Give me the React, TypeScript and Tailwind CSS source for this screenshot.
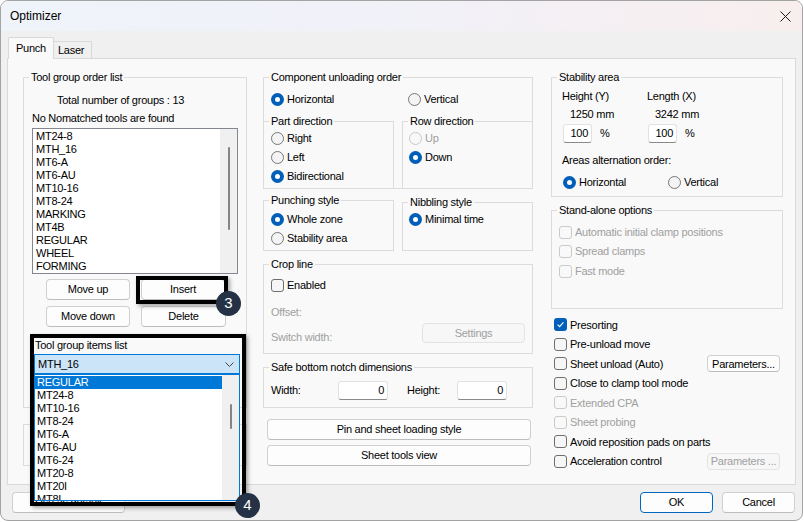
import React from "react";

type RProps = { checked?: boolean; disabled?: boolean; label: string; className?: string };

function Radio({ checked = false, disabled = false, label, className = "" }: RProps) {
  return (
    <div className={`flex items-center h-[14px] gap-[3px] whitespace-nowrap ${disabled ? "text-[#a0a0a0]" : "text-black"} ${className}`}>
      {checked ? (
        <span className="w-[13px] h-[13px] rounded-full bg-[#005fb8] flex items-center justify-center shrink-0">
          <span className="w-[5px] h-[5px] rounded-full bg-white" />
        </span>
      ) : (
        <span
          className={`w-[13px] h-[13px] rounded-full border shrink-0 ${
            disabled ? "border-[#c8c8c8] bg-[#f8f8f8]" : "border-[#767676] bg-[#f4f4f4]"
          }`}
        />
      )}
      <span>{label}</span>
    </div>
  );
}

function Check({ checked = false, disabled = false, label, className = "" }: RProps) {
  return (
    <div className={`flex items-center h-[14px] gap-[3px] whitespace-nowrap ${disabled ? "text-[#a0a0a0]" : "text-black"} ${className}`}>
      {checked ? (
        <span className="w-[13px] h-[13px] rounded-[3px] bg-[#005fb8] flex items-center justify-center shrink-0">
          <svg width="9" height="9" viewBox="0 0 9 9">
            <path d="M1.6 4.7 L3.6 6.6 L7.4 2.3" fill="none" stroke="white" strokeWidth="1.1" />
          </svg>
        </span>
      ) : (
        <span
          className={`w-[13px] h-[13px] rounded-[3px] border shrink-0 ${
            disabled ? "border-[#cacaca] bg-[#f9f9f9]" : "border-[#6e6e6e] bg-[#f6f6f6]"
          }`}
        />
      )}
      <span>{label}</span>
    </div>
  );
}

function Btn({
  children,
  className = "",
  disabled = false,
}: {
  children: React.ReactNode;
  className?: string;
  disabled?: boolean;
}) {
  return (
    <div
      className={`flex items-center justify-center rounded-[4px] border whitespace-nowrap ${
        disabled
          ? "border-[#e3e3e3] bg-[#f7f7f7] text-[#a0a0a0]"
          : "border-[#d0d0d0] border-b-[#bdbdbd] bg-[#fdfdfd] text-black"
      } ${className}`}
    >
      {children}
    </div>
  );
}

function Group({
  label,
  className = "",
  children,
}: {
  label?: string;
  className?: string;
  children?: React.ReactNode;
}) {
  return (
    <fieldset className={`border-[#dcdcdc] min-w-0 ${className}`}>
      {label && <legend className="ml-[5px] px-[2px] leading-[14px] whitespace-nowrap">{label}</legend>}
      {children}
    </fieldset>
  );
}

function Input({ value, className = "" }: { value: string; className?: string }) {
  return (
    <div
      className={`h-[19px] bg-white border border-[#e2e2e2] border-b-[#8a8a8a] rounded-[3px] flex items-center justify-end pr-[3px] ${className}`}
    >
      {value}
    </div>
  );
}

const orderItems = ["MT24-8", "MTH_16", "MT6-A", "MT6-AU", "MT10-16", "MT8-24", "MARKING", "MT4B", "REGULAR", "WHEEL", "FORMING"];
const dropItems = ["REGULAR", "MT24-8", "MT10-16", "MT8-24", "MT6-A", "MT6-AU", "MT6-24", "MT20-8", "MT20I", "MT8I"];

export default function App() {
  return (
    <div className="relative w-[804px] h-[522px] bg-white font-['Liberation_Sans',Arial,sans-serif] text-[11px] tracking-[-0.25px] text-black">
      <div className="w-[803px] h-[521px] rounded-[8px] border border-[#a3a3a3] overflow-hidden flex flex-col bg-[#f0f0f0]">
        {/* Title bar */}
        <div className="h-[30px] shrink-0 flex items-center justify-between pl-[9px] pr-[9px] bg-gradient-to-r from-[#eff3fa] via-[#f1f1f8] to-[#f8eeee]">
          <span className="text-[12px] tracking-normal">Optimizer</span>
          <svg width="11" height="11" viewBox="0 0 11 11" className="mr-[2px]">
            <path d="M0.5 0.5 L10.5 10.5 M10.5 0.5 L0.5 10.5" stroke="#1b1b1b" strokeWidth="1" />
          </svg>
        </div>

        {/* Tabs */}
        <div className="h-[27px] shrink-0 flex items-end pl-[7px] relative z-10">
          <div className="h-[22px] w-[46px] -mb-px border border-b-0 border-[#d9d9d9] bg-[#f9f9f9] pl-[7px] pt-[3px] leading-[14px] rounded-t-[2px]">
            Punch
          </div>
          <div className="h-[17px] w-[38px] border border-l-0 border-b-0 border-[#d9d9d9] bg-[#f0f0f0] pl-[4px] pt-[1px] leading-[14px]">
            Laser
          </div>
        </div>

        {/* Panel */}
        <div className="ml-[6px] w-[789px] h-[427px] shrink-0 border border-[#d9d9d9] bg-[#f9f9f9] flex pl-[15px] pt-[11px]">
          {/* Left column */}
          <div className="w-[224px] flex flex-col shrink-0">
            <Group label="Tool group order list" className="border h-[338px]">
              <div className="pl-[8px] flex flex-col">
                <div className="mt-[9px] leading-[14px] pl-[25px]">Total number of groups : 13</div>
                <div className="mt-[4px] leading-[14px]">No Nomatched tools are found</div>
                <div className="mt-[3px] w-[206px] h-[146px] border border-[#828790] bg-white flex">
                  <div className="flex-1 pl-[3px] pt-[1px] leading-[13px]">
                    {orderItems.map((t) => (
                      <div key={t} className="h-[13px]">
                        {t}
                      </div>
                    ))}
                  </div>
                  <div className="w-[17px] bg-[#f0f0f0] flex justify-center pt-[18px]">
                    <div className="w-[2px] h-[83px] rounded-full bg-[#858585]" />
                  </div>
                </div>
                <div className="mt-[5px] flex gap-[11px] ml-[14px]">
                  <Btn className="w-[84px] h-[21px]">Move up</Btn>
                  <Btn className="w-[84px] h-[21px]">Insert</Btn>
                </div>
                <div className="mt-[6px] flex gap-[11px] ml-[14px]">
                  <Btn className="w-[84px] h-[21px]">Move down</Btn>
                  <Btn className="w-[85px] h-[21px]">Delete</Btn>
                </div>
                <div className="mt-[11px] ml-[3px] leading-[14px]">Tool group items list</div>
                <div className="mt-[2px] ml-[2px] w-[206px] h-[20px] border border-[#0078d7] bg-[#cce4f7] flex items-center justify-between pl-[3px] pr-[5px]">
                  <span>MTH_16</span>
                  <svg width="9" height="5" viewBox="0 0 9 5">
                    <path d="M0.5 0.5 L4.5 4.5 L8.5 0.5" fill="none" stroke="#444" strokeWidth="1" />
                  </svg>
                </div>
              </div>
            </Group>
            <div className="mt-[16px] h-[42px] border border-[#dcdcdc]" />
          </div>

          {/* Middle column */}
          <div className="w-[270px] ml-[16px] flex flex-col shrink-0">
            <Group label="Component unloading order" className="border h-[119px]">
              <div className="mt-[8px] grid grid-cols-[130px_130px] gap-x-[8px]">
                <Radio checked label="Horizontal" className="pl-[7px]" />
                <Radio label="Vertical" className="pl-[6px]" />
              </div>
              <div className="mt-[8px] grid grid-cols-[130px_130px] gap-x-[8px]">
                <Group label="Part direction" className="border-0 border-t border-r h-[74px]">
                  <div className="mt-[3px] flex flex-col gap-[5px] pl-[7px]">
                    <Radio label="Right" />
                    <Radio label="Left" />
                    <Radio checked label="Bidirectional" />
                  </div>
                </Group>
                <Group label="Row direction" className="border-0 border-t border-l h-[74px]">
                  <div className="mt-[3px] flex flex-col gap-[5px] pl-[6px]">
                    <Radio disabled label="Up" />
                    <Radio checked label="Down" />
                  </div>
                </Group>
              </div>
            </Group>

            <div className="mt-[4px] grid grid-cols-[131px_131px] gap-x-[8px] items-start">
              <Group label="Punching style" className="border h-[58px]">
                <div className="mt-[5px] flex flex-col gap-[5px] pl-[7px]">
                  <Radio checked label="Whole zone" />
                  <Radio label="Stability area" />
                </div>
              </Group>
              <Group label="Nibbling style" className="border h-[56px] mt-[2px]">
                <div className="mt-[3px] flex flex-col gap-[5px] pl-[6px]">
                  <Radio checked label="Minimal time" />
                </div>
              </Group>
            </div>

            <Group label="Crop line" className="border h-[97px] mt-[6px]">
              <div className="pl-[7px] pr-[7px] flex flex-col">
                <Check label="Enabled" className="mt-[7px]" />
                <div className="mt-[13px] leading-[14px] text-[#a0a0a0]">Offset:</div>
                <div className="mt-[4px] h-[21px] flex items-end justify-between">
                  <span className="leading-[14px] text-[#a0a0a0]">Switch width:</span>
                  <Btn disabled className="w-[103px] h-[20px] mb-[1px]">
                    Settings
                  </Btn>
                </div>
              </div>
            </Group>

            <Group label="Safe bottom notch dimensions" className="border h-[48px] mt-[6px]">
              <div className="mt-[7px] pl-[7px] flex items-center h-[19px]">
                <span className="w-[67px]">Width:</span>
                <Input value="0" className="w-[50px]" />
                <span className="w-[69px] pl-[19px]">Height:</span>
                <Input value="0" className="w-[50px]" />
              </div>
            </Group>

            <Btn className="mt-[11px] ml-[4px] w-[264px] h-[21px]">Pin and sheet loading style</Btn>
            <Btn className="mt-[5px] ml-[4px] w-[264px] h-[21px]">Sheet tools view</Btn>
          </div>

          {/* Right column */}
          <div className="w-[232px] ml-[18px] flex flex-col shrink-0">
            <Group label="Stability area" className="border h-[127px]">
              <div className="pl-[10px] flex flex-col">
                <div className="mt-[5px] grid grid-cols-[85px_1fr] leading-[14px]">
                  <span>Height (Y)</span>
                  <span>Length (X)</span>
                </div>
                <div className="mt-[4px] grid grid-cols-[85px_1fr] leading-[14px]">
                  <span className="pl-[8px]">1250 mm</span>
                  <span className="pl-[8px]">3242 mm</span>
                </div>
                <div className="mt-[3px] grid grid-cols-[85px_1fr]">
                  <div className="flex items-center pl-[1px]">
                    <Input value="100" className="w-[29px]" />
                    <span className="ml-[8px]">%</span>
                  </div>
                  <div className="flex items-center pl-[1px]">
                    <Input value="100" className="w-[29px]" />
                    <span className="ml-[8px]">%</span>
                  </div>
                </div>
                <div className="mt-[10px] leading-[14px]">Areas alternation order:</div>
                <div className="mt-[8px] grid grid-cols-[85px_1fr]">
                  <Radio checked label="Horizontal" className="pl-[1px]" />
                  <Radio label="Vertical" className="pl-[21px]" />
                </div>
              </div>
            </Group>

            <Group label="Stand-alone options" className="border h-[106px] mt-[6px]">
              <div className="mt-[8px] pl-[7px] flex flex-col gap-[5.5px]">
                <Check disabled label="Automatic initial clamp positions" />
                <Check disabled label="Spread clamps" />
                <Check disabled label="Fast mode" />
              </div>
            </Group>

            <div className="mt-[6px] pl-[3px] pr-[3px] flex flex-col">
              <div className="h-[19.5px] flex items-center">
                <Check checked label="Presorting" />
              </div>
              <div className="h-[19.5px] flex items-center">
                <Check label="Pre-unload move" />
              </div>
              <div className="h-[19.5px] flex items-center justify-between">
                <Check label="Sheet unload (Auto)" />
                <Btn className="w-[73px] h-[17px]">Parameters...</Btn>
              </div>
              <div className="h-[19.5px] flex items-center">
                <Check label="Close to clamp tool mode" />
              </div>
              <div className="h-[19.5px] flex items-center">
                <Check disabled label="Extended CPA" />
              </div>
              <div className="h-[19.5px] flex items-center">
                <Check disabled label="Sheet probing" />
              </div>
              <div className="h-[19.5px] flex items-center">
                <Check label="Avoid reposition pads on parts" />
              </div>
              <div className="h-[19.5px] flex items-center justify-between">
                <Check label="Acceleration control" />
                <Btn disabled className="w-[73px] h-[17px]">
                  Parameters ...
                </Btn>
              </div>
            </div>
          </div>
        </div>

        {/* Footer */}
        <div className="flex-1 flex items-start pt-[7px] pl-[11px] pr-[7px]">
          <Btn className="w-[113px] h-[21px]">Use as default</Btn>
          <div className="ml-auto flex gap-[9px]">
            <Btn className="w-[73px] h-[21px] !border-[#0067c0]">OK</Btn>
            <Btn className="w-[73px] h-[21px]">Cancel</Btn>
          </div>
        </div>
      </div>

      {/* Dropdown popup (open combobox list) */}
      <div className="absolute left-[34px] top-[374px] w-[206px] h-[127px] border border-[#0078d7] bg-white flex overflow-hidden z-20">
        <div className="flex-1 pt-[1px] leading-[13px]">
          {dropItems.map((t, i) => (
            <div key={t} className={`h-[13px] pl-[2px] ${i === 0 ? "bg-[#0078d7] text-white" : ""}`}>
              {t}
            </div>
          ))}
        </div>
        <div className="w-[17px] bg-[#f0f0f0] flex justify-center pt-[29px]">
          <div className="w-[2px] h-[25px] rounded-full bg-[#858585]" />
        </div>
      </div>

      {/* Annotation frames */}
      <div className="absolute left-[136px] top-[276px] w-[92px] h-[28px] border-4 border-black shadow-[2px_2px_4px_rgba(0,0,0,0.35)] z-30" />
      <div className="absolute left-[216px] top-[291px] w-[25px] h-[25px] rounded-full bg-[#253246] text-white text-[15px] tracking-normal flex items-center justify-center z-40">
        3
      </div>
      <div className="absolute left-[30px] top-[334px] w-[216px] h-[172px] border-4 border-black shadow-[2px_2px_4px_rgba(0,0,0,0.35)] z-30" />
      <div className="absolute left-[235px] top-[493px] w-[25px] h-[25px] rounded-full bg-[#253246] text-white text-[15px] tracking-normal flex items-center justify-center z-40">
        4
      </div>
    </div>
  );
}
